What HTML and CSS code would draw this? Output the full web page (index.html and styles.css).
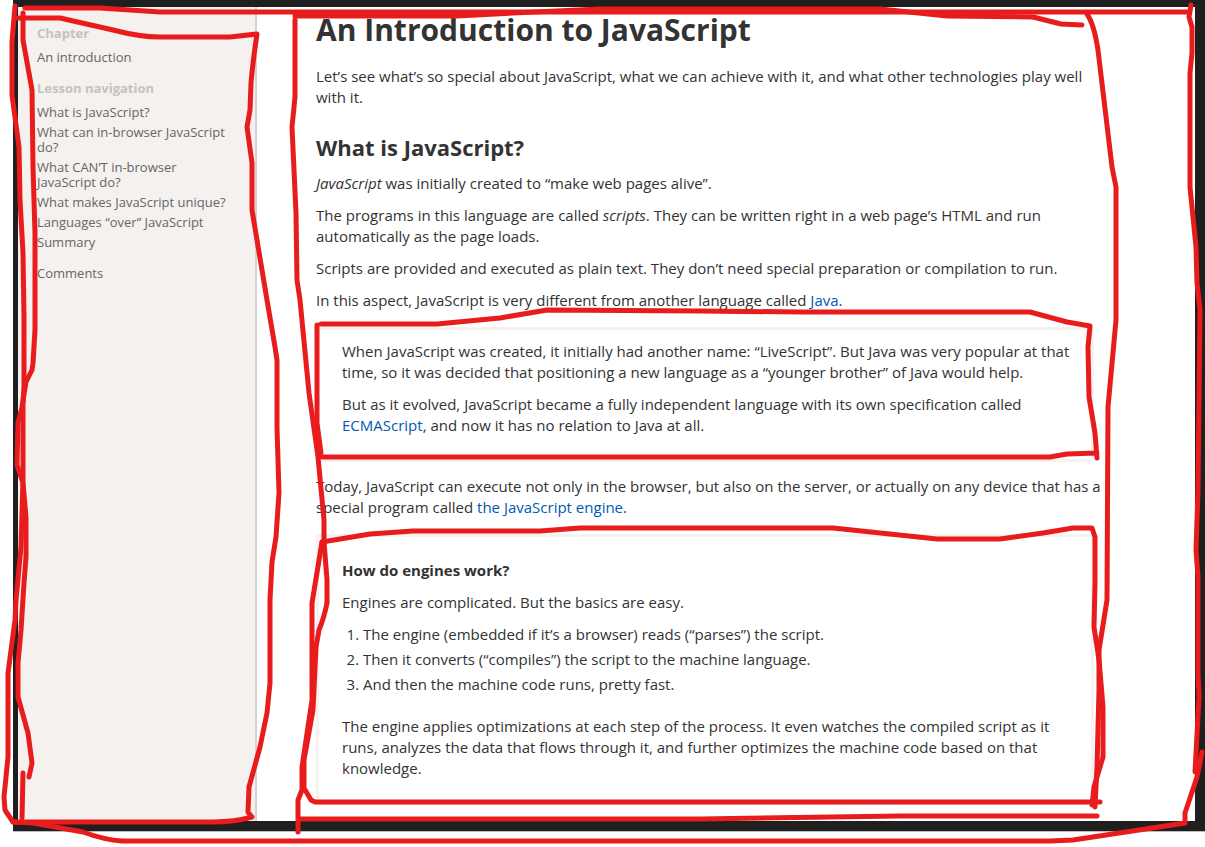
FILE: index.html
```html
<!DOCTYPE html>
<html lang="en">
<head>
<meta charset="utf-8">
<title>An Introduction to JavaScript</title>
<link rel="stylesheet" href="styles.css">
</head>
<body>
<div class="frame">
  <aside class="sidebar">
    <h4 class="side-title">Chapter</h4>
    <ul class="side-list"><li><a href="#">An introduction</a></li></ul>
    <h4 class="side-title">Lesson navigation</h4>
    <ul class="side-list">
      <li><a href="#what">What is JavaScript?</a></li>
      <li><a href="#can">What can in-browser JavaScript do?</a></li>
      <li><a href="#cant">What CAN’T in-browser JavaScript do?</a></li>
      <li><a href="#unique">What makes JavaScript unique?</a></li>
      <li><a href="#over">Languages “over” JavaScript</a></li>
      <li><a href="#summary">Summary</a></li>
    </ul>
    <ul class="side-list"><li><a href="#comments">Comments</a></li></ul>
  </aside>
  <main class="article">
    <h1>An Introduction to JavaScript</h1>
    <p>Let’s see what’s so special about JavaScript, what we can achieve with it, and what other technologies play well with it.</p>
    <h2 id="what">What is JavaScript?</h2>
    <p><em>JavaScript</em> was initially created to “make web pages alive”.</p>
    <p>The programs in this language are called <em>scripts</em>. They can be written right in a web page’s HTML and run automatically as the page loads.</p>
    <p>Scripts are provided and executed as plain text. They don’t need special preparation or compilation to run.</p>
    <p>In this aspect, JavaScript is very different from another language called <a href="#java">Java</a>.</p>
    <section class="note">
      <p>When JavaScript was created, it initially had another name: “LiveScript”. But Java was very popular at that time, so it was decided that positioning a new language as a “younger brother” of Java would help.</p>
      <p>But as it evolved, JavaScript became a fully independent language with its own specification called <a href="#ecma">ECMAScript</a>, and now it has no relation to Java at all.</p>
    </section>
    <p>Today, JavaScript can execute not only in the browser, but also on the server, or actually on any device that has a special program called <a href="#engine">the JavaScript engine</a>.</p>
    <section class="note note-titled">
      <h3>How do engines work?</h3>
      <p>Engines are complicated. But the basics are easy.</p>
      <ol>
        <li>The engine (embedded if it’s a browser) reads (“parses”) the script.</li>
        <li>Then it converts (“compiles”) the script to the machine language.</li>
        <li>And then the machine code runs, pretty fast.</li>
      </ol>
      <p>The engine applies optimizations at each step of the process. It even watches the compiled script as it runs, analyzes the data that flows through it, and further optimizes the machine code based on that knowledge.</p>
    </section>
  </main>
</div>
<svg class="marks" width="1205" height="847" viewBox="0 0 1205 847" aria-hidden="true">
  <!-- outer page outline -->
  <path d="M15 6L12 42V95L19 147L20 200L23 253L24 317V387L23 403V480L21 547L16 600L15 620L8 673V757L4 797L5 810L13 822L33 823L83 832Q105 840 122 841H1050L1073 840L1185 823V813L1197 777L1202 752"/>
  <path d="M25 8L100 8L160 12H1188"/>
  <path d="M1191 5L1189 17L1192 27V53L1190 73V187L1196 247L1197 283L1200 310L1198 490L1196 550L1198 577V673L1199 697L1195 772"/>
  <!-- sidebar outline -->
  <path d="M18 18H60L113 30Q140 37 160 37H230L257 34Q253 60 251 83L250 110L247 127L252 163V210L267 300L275 347L277 360V428L279 493L276 537L272 562L270 600V683L267 713L260 747L249 787L248 812L252 817Q235 822 213 822H13"/>
  <path d="M23 13V40L32 90L33 167L35 233V330L33 363L32 370L26 382L22 407L18 423L17 465L23 483L26 517V557L24 583L21 630L18 663V697L28 733L32 763L29 777M23 773L22 818"/>
  <!-- article outline -->
  <path d="M295 16H457L513 13L600 9H880L947 16L1033 17L1061 24L1082 25M295 14H457"/>
  <path d="M295 20V97L292 127L296 213L297 280L300 300L309 393L318 457L324 520V542L327 580V603Q324 618 319 630L316 647L313 710L304 760V788L311 800L315 802H1100"/>
  <path d="M1087 14Q1094 24 1098 50L1112 167L1116 187V320L1108 407L1107 600L1099 650V690L1097 767L1095 807"/>
  <path d="M322 542L312 603V700L302 767V790L298 800V832M300 819H700L900 816H1097"/>
  <!-- note outlines -->
  <path d="M317 325V423L321 453M321 324H437L500 318L547 310L700 311L800 312H1030L1067 322L1090 326L1088 347L1089 397L1095 433L1097 458M322 457H1050L1067 454L1097 453"/>
  <path d="M322 542L370 534L413 531H540L580 528H833L937 539H1000L1043 533L1073 528H1092L1095 537V583L1094 627L1099 660L1103 707V757L1094 787L1092 805"/>
</svg>
</body>
</html>
```
FILE: styles.css
```css
* { box-sizing: border-box; }
body {
  margin: 0;
  background: #fff;
  color: #333;
  font: 15px/21px "Open Sans", "Noto Sans", sans-serif;
  position: relative;
  overflow-x: hidden;
}
.frame {
  display: flex;
  margin: 0 0 16px 13px;
  border: solid #1f1f1f;
  border-width: 7px 10px 10px 5px;
  min-height: 831px;
  background: #fff;
  box-shadow: 0 1px #bbb;
}
.sidebar {
  flex: 0 0 239px;
  padding: 19px 20px 0 19px;
  background: #f5f1ee;
  border-right: 2px solid #d6d2cf;
  font-size: 13px;
  line-height: 15px;
}
.side-title { margin: 0 0 9px; font-size: 13px; color: #c4c2c0; }
.side-list { list-style: none; margin: 0 0 16px; padding: 0; }
.side-list li { margin-bottom: 5px; }
.side-list li:last-child { margin-bottom: 0; }
.side-list a { color: #666; text-decoration: none; }
.article { flex: 1; min-width: 0; padding: 5px 91px 0 59px; }
h1, h2, h3, p, ol { margin: 0; }
h1 { font-size: 30px; line-height: 36px; margin-bottom: 18px; }
h2 { font-size: 22px; line-height: 28px; margin: 25px 0 12px; }
h3 { font-size: 15px; line-height: 21px; margin-bottom: 11px; }
p { margin-bottom: 11px; }
.article a { color: #0059b2; text-decoration: none; }
.note {
  margin: 16px 10px 14px 0;
  padding: 11px 13px 11px 23px;
  border: 3px solid #f5f2f0;
  border-radius: 3px;
}
.note p:last-child { margin-bottom: 12px; }
.note-titled { padding-top: 23px; }
ol { padding-left: 21px; margin-bottom: 21px; }
li + li { margin-top: 4px; }
.side-list li + li { margin-top: 0; }
.marks { position: absolute; left: 0; top: 0; pointer-events: none; }
.marks path {
  fill: none;
  stroke: #e81c1c;
  stroke-width: 5;
  stroke-linecap: round;
  stroke-linejoin: round;
}
```
